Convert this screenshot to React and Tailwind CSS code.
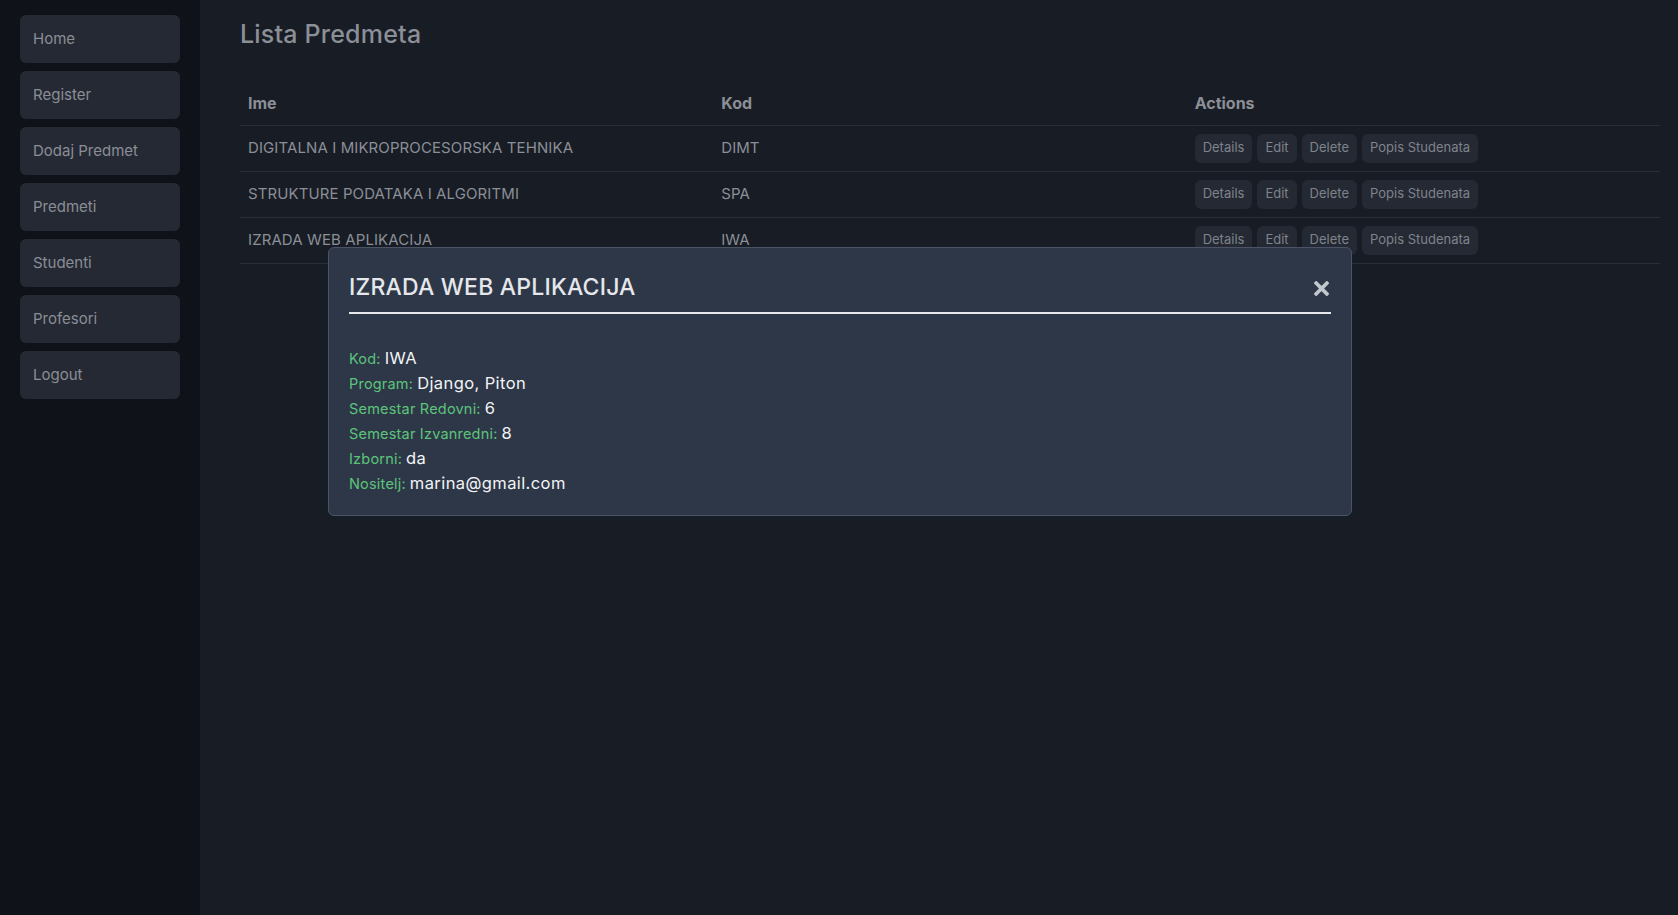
import React from "react";

const nav = ["Home", "Register", "Dodaj Predmet", "Predmeti", "Studenti", "Profesori", "Logout"];
const rows = [
  ["DIGITALNA I MIKROPROCESORSKA TEHNIKA", "DIMT"],
  ["STRUKTURE PODATAKA I ALGORITMI", "SPA"],
  ["IZRADA WEB APLIKACIJA", "IWA"],
];
const details = [
  ["Kod:", "IWA"],
  ["Program:", "Django, Piton"],
  ["Semestar Redovni:", "6"],
  ["Semestar Izvanredni:", "8"],
  ["Izborni:", "da"],
  ["Nositelj:", "marina@gmail.com"],
];

export default function App() {
  return (
    <div
      className="flex w-full h-[915px] bg-[#181c24] overflow-hidden"
      style={{ fontFamily: "Inter, 'Noto Sans', sans-serif" }}
    >
      <aside className="w-[200px] shrink-0 bg-[#0f1219] pt-[15px] px-[20px] flex flex-col gap-[8px]">
        {nav.map((n) => (
          <div
            key={n}
            className="h-[48px] rounded-[6px] bg-[#252933] flex items-center pl-[13px] text-[15px] text-[#8a8e96]"
          >
            {n}
          </div>
        ))}
      </aside>
      <main className="relative flex-1 pl-[40px] pr-[18px]">
        <h1 className="text-[25px] leading-[30px] text-[#8b8f97] mt-[19px] font-medium tracking-[0.2px]">Lista Predmeta</h1>
        <table className="mt-[33px] w-full table-fixed border-collapse">
          <thead>
            <tr className="border-b border-[#2a2f3a]">
              <th className="text-left px-[8px] h-[43px] text-[16px] font-bold text-[#8b8f97]">Ime</th>
              <th className="text-left px-[8px] text-[16px] font-bold text-[#8b8f97]">Kod</th>
              <th className="text-left px-[8px] text-[16px] font-bold text-[#8b8f97]">Actions</th>
            </tr>
          </thead>
          <tbody>
            {rows.map(([ime, kod]) => (
              <tr key={kod} className="border-b border-[#2a2f3a]">
                <td className="px-[8px] h-[46px] text-[15px] text-[#8b8f97] tracking-[0.1px]">{ime}</td>
                <td className="px-[8px] text-[15px] text-[#8b8f97]">{kod}</td>
                <td className="px-[8px]">
                  <div className="flex gap-[5px]">
                    {["Details", "Edit", "Delete", "Popis Studenata"].map((b) => (
                      <span
                        key={b}
                        className="h-[29px] px-[8px] rounded-[6px] bg-[#252933] text-[13px] text-[#7e838c] flex items-center"
                      >
                        {b}
                      </span>
                    ))}
                  </div>
                </td>
              </tr>
            ))}
          </tbody>
        </table>

        <div className="absolute left-[128px] top-[247px] w-[1024px] h-[269px] bg-[#2e3748] border border-[#4b5466] rounded-[6px] px-[20px] pt-[23px]">
          <div className="flex items-center justify-between border-b-2 border-[#e5e7eb] pb-[9px]">
            <h2 className="text-[23px] leading-[32px] font-medium text-[#e5e7eb] tracking-[0.2px]">IZRADA WEB APLIKACIJA</h2>
            <svg width="15" height="15" viewBox="0 0 14 14" className="mr-[2px] mt-[2px]">
              <path d="M2 2 L12 12 M12 2 L2 12" stroke="#c2c6cd" strokeWidth="3.4" strokeLinecap="square" />
            </svg>
          </div>
          <div className="mt-[32px] flex flex-col">
            {details.map(([l, v]) => (
              <div key={l} className="h-[25px] flex items-center gap-[4px]">
                <span className="text-[14.5px] text-[#5cc47a] tracking-[0.2px]">{l}</span>
                <span className="text-[16.5px] text-[#f3f4f6] tracking-[0.4px]">{v}</span>
              </div>
            ))}
          </div>
        </div>
      </main>
    </div>
  );
}
